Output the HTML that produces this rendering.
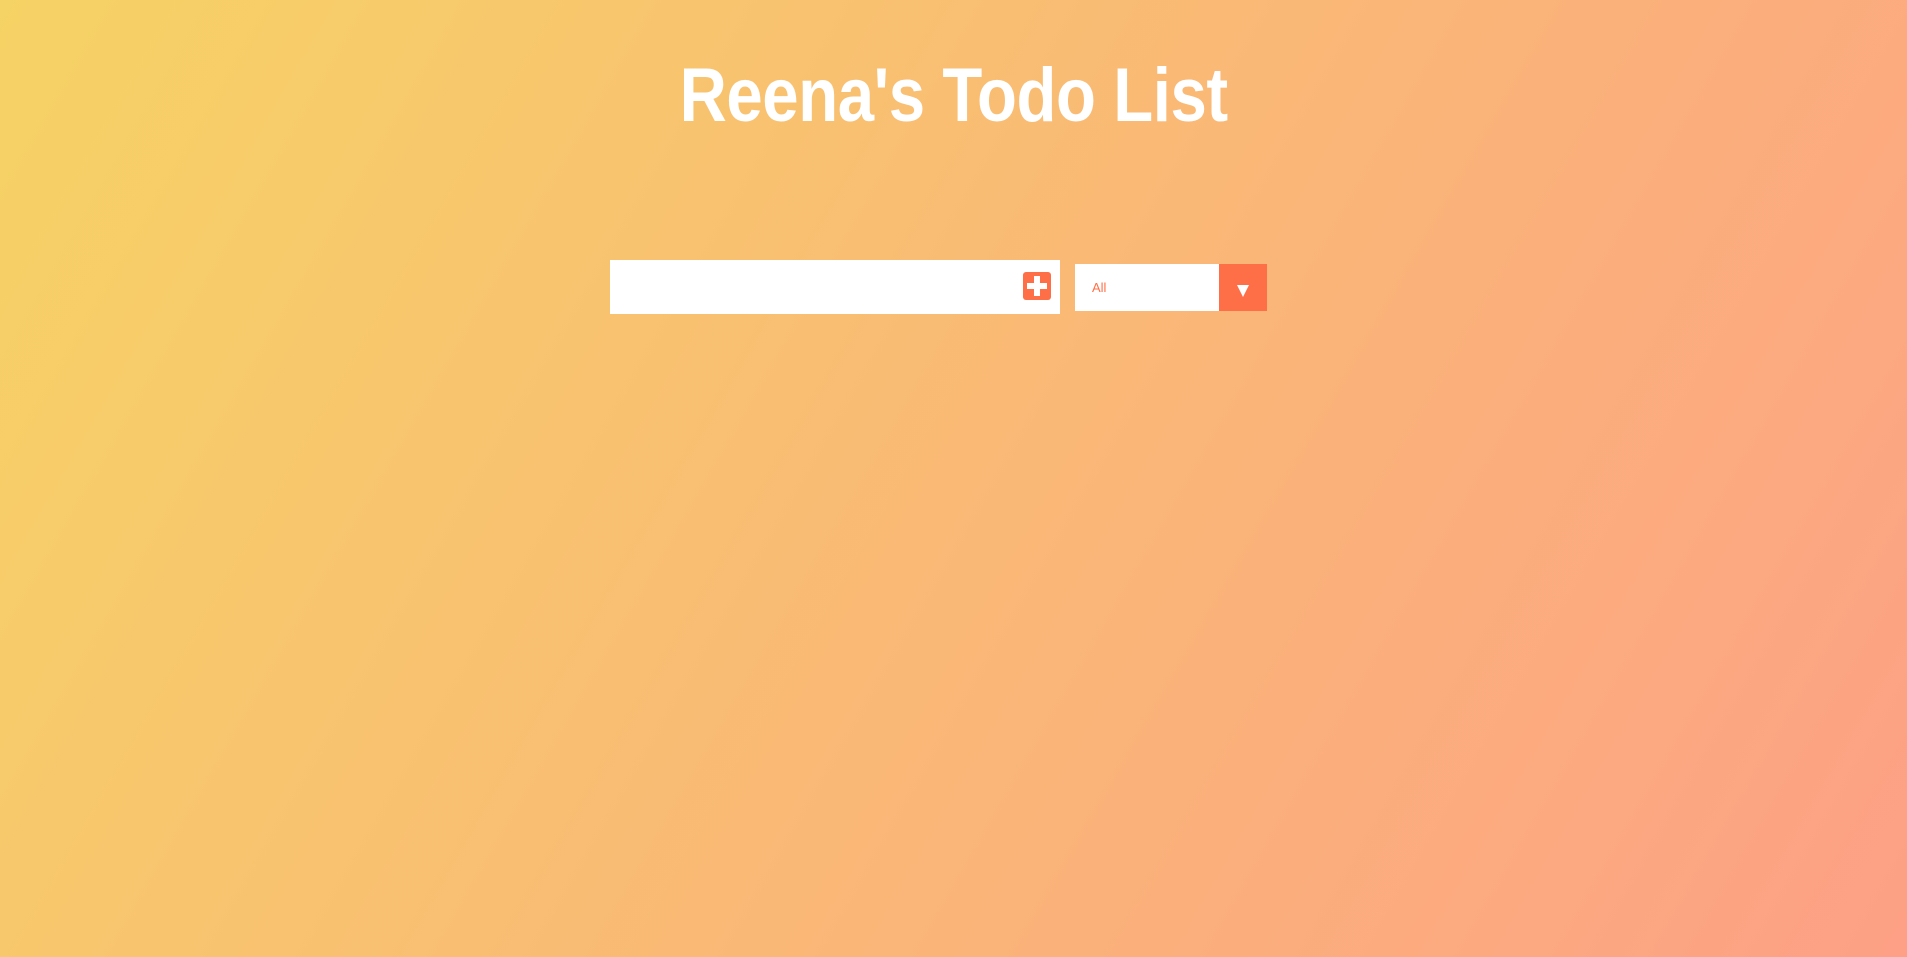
<!DOCTYPE html>
<html><head><style>
html,body{margin:0;padding:0;width:1907px;height:957px;overflow:hidden}
body{background:linear-gradient(120deg,#f6d365 0%,#fda085 100%);font-family:"Liberation Sans",sans-serif;position:relative}
h1{position:absolute;left:0;width:1907px;top:48px;margin:0;text-align:center;color:#fff;font-size:76px;font-weight:bold;line-height:96px}
h1 span{display:inline-block;transform:scaleX(0.86);letter-spacing:-0.5px}
.inp{position:absolute;left:610px;top:260px;width:450px;height:54px;background:#fff}
.plus{position:absolute;left:413px;top:12px;width:28px;height:28px;background:#ff6f47;border-radius:3px}
.plus:before{content:"";position:absolute;left:11px;top:4px;width:6px;height:20px;background:#fff}
.plus:after{content:"";position:absolute;left:4px;top:11px;width:20px;height:6px;background:#fff}
.sel{position:absolute;left:1075px;top:264px;width:192px;height:47px;background:#fff}
.sel span{position:absolute;left:17px;top:16px;font-size:13px;color:#ff6f47}
.arr{position:absolute;right:0;top:0;width:48px;height:47px;background:#ff6f47}
.arr:after{content:"";position:absolute;left:18px;top:21px;border-left:6px solid transparent;border-right:6px solid transparent;border-top:12px solid #fff}
</style></head><body>
<h1><span>Reena's Todo List</span></h1>
<div class="inp"><div class="plus"></div></div>
<div class="sel"><span>All</span><div class="arr"></div></div>
</body></html>
